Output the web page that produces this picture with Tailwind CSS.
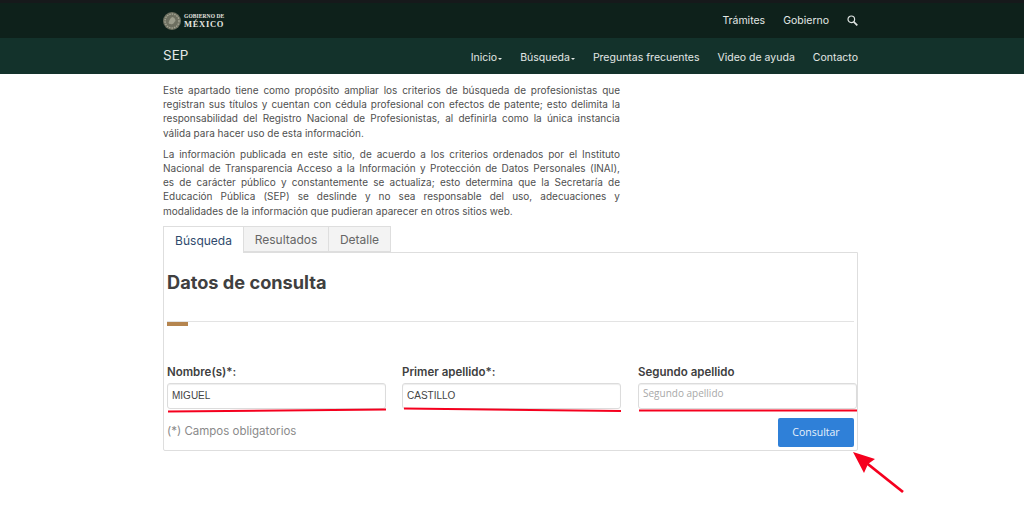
<!DOCTYPE html>
<html lang="es">
<head>
    <meta charset="UTF-8">
    <title>Cédula profesional - Búsqueda</title>
    <script src="https://cdn.jsdelivr.net/npm/@tailwindcss/browser@4"></script>
</head>
<body class="relative h-[526px] w-[1024px] overflow-hidden bg-white font-['Inter',sans-serif] text-[#505050]">
    <!-- Barra gobierno -->
    <div class="h-[3px] bg-[#16191b]"></div>
    <div class="h-[35px] bg-[#0e211b]">
        <div class="ml-[163px] flex h-full w-[695px] items-center justify-between">
            <div class="flex items-center gap-[3px]">
                <svg width="18" height="18" viewBox="0 0 18 18">
                    <circle cx="9" cy="9" r="9" fill="#6d6f60"/>
                    <circle cx="9" cy="9" r="7" fill="none" stroke="#a3a493" stroke-width="1.4" stroke-dasharray="1.5 1"/>
                    <path d="M5.5 11c1-3 2-5.5 4-6 1.5.3 3 2 3 4-1 .5-1.500 2.500-3 3-1.500.4-3 .2-4-1z" fill="#9c9d8c"/>
                </svg>
                <div class="font-['Liberation_Serif',serif] font-bold text-[#e6e6e0]">
                    <div class="text-[5.500px] leading-[7px] tracking-[0.1px]">GOBIERNO DE</div>
                    <div class="text-[8.500px] leading-[9px] tracking-[0.7px]">MÉXICO</div>
                </div>
            </div>
            <div class="flex items-center pt-[1px] text-[10.500px] text-[#e3e8e6]">
                <span class="mr-[18px]">Trámites</span>
                <span class="mr-[18px]">Gobierno</span>
                <svg class="mb-[2px]" width="11" height="11" viewBox="0 0 11 11" fill="none" stroke="#dfe4e2">
                    <circle cx="4.300" cy="4.300" r="3.300" stroke-width="1.200"/>
                    <path d="M6.800 6.800L10.300 10.300" stroke-width="1.700"/>
                </svg>
            </div>
        </div>
    </div>
    <!-- Barra SEP -->
    <div class="h-[36px] bg-[#13322b]">
        <div class="ml-[163px] flex h-full w-[695px] items-center justify-between text-[#e3e8e6]">
            <span class="mb-[2px] text-[13.500px]">SEP</span>
            <nav class="flex items-center pt-[3px] text-[10.500px]">
                <span class="flex items-center gap-[1px]">Inicio<i class="mt-[2px] border-x-[2.500px] border-t-[2.500px] border-x-transparent border-t-[#e3e8e6]"></i></span>
                <span class="ml-[18px] flex items-center gap-[1px]">Búsqueda<i class="mt-[2px] border-x-[2.500px] border-t-[2.500px] border-x-transparent border-t-[#e3e8e6]"></i></span>
                <span class="ml-[18px]">Preguntas frecuentes</span>
                <span class="ml-[18px]">Video de ayuda</span>
                <span class="ml-[18px]">Contacto</span>
            </nav>
        </div>
    </div>

    <main class="ml-[163px] w-[695px]">
        <!-- Texto -->
        <div class="w-[457px] pt-[9px] text-[10px] leading-[14.200px] whitespace-nowrap [&>p>span]:block [&>p>span]:[text-align:justify] [&>p>span]:[text-align-last:justify]">
            <p>
                <span>Este apartado tiene como propósito ampliar los criterios de búsqueda de profesionistas que</span>
                <span>registran sus títulos y cuentan con cédula profesional con efectos de patente; esto delimita la</span>
                <span>responsabilidad del Registro Nacional de Profesionistas, al definirla como la única instancia</span>
                <span class="[text-align-last:left]!">válida para hacer uso de esta información.</span>
            </p>
            <p class="mt-[7px]">
                <span>La información publicada en este sitio, de acuerdo a los criterios ordenados por el Instituto</span>
                <span>Nacional de Transparencia  Acceso a la Información y Protección de Datos Personales (INAI),</span>
                <span>es de carácter público y constantemente se actualiza; esto determina que la Secretaría de</span>
                <span>Educación Pública (SEP) se deslinde y no sea responsable del uso, adecuaciones y</span>
                <span class="[text-align-last:left]!">modalidades de la información que pudieran aparecer en otros sitios web.</span>
            </p>
        </div>

        <!-- Pestañas -->
        <div class="mt-[8px] flex h-[27px] text-[12px]">
            <div class="z-10 flex h-[27px] w-[81px] items-center justify-center border-x border-t border-[#dedede] bg-white pt-[2px] text-[#2f4a6d]">Búsqueda</div>
            <div class="flex h-[26px] w-[85px] items-center justify-center border-y border-r border-[#dedede] bg-[#f3f3f3] pt-[2px] text-[#666]">Resultados</div>
            <div class="flex h-[26px] w-[62px] items-center justify-center border-y border-r border-[#dedede] bg-[#f3f3f3] pt-[2px] text-[#666]">Detalle</div>
        </div>

        <!-- Panel -->
        <div class="-mt-px h-[199px] rounded-b-[2px] border border-[#dedede] px-[3px]">
            <h2 class="pt-[17px] text-[18.200px] leading-[24px] font-bold text-[#404040]">Datos de consulta</h2>
            <div class="mt-[27px] h-px bg-[#e3e3e3]"></div>
            <div class="h-[4px] w-[21px] bg-[#b5854f]"></div>

            <div class="mt-[38px] grid grid-cols-[219px_219px_219px] gap-x-[16px] text-[11.500px] font-semibold text-[#404040]">
                <label>Nombre(s)*:</label>
                <label>Primer apellido*:</label>
                <label class="ml-[1px]">Segundo apellido</label>
            </div>
            <div class="mt-[2px] grid grid-cols-[219px_219px_219px] gap-x-[16px] text-[10px]">
                <div class="flex h-[26px] items-center rounded-[3px] border border-[#dcdcdc] px-[4px] pb-[2px] font-['Liberation_Sans',sans-serif] text-[#444] shadow-[inset_0_1px_1px_rgba(0,0,0,0.07)]">MIGUEL</div>
                <div class="flex h-[26px] items-center rounded-[3px] border border-[#dcdcdc] px-[4px] pb-[2px] font-['Liberation_Sans',sans-serif] text-[#444] shadow-[inset_0_1px_1px_rgba(0,0,0,0.07)]">CASTILLO</div>
                <div class="ml-[1px] flex h-[26px] w-[219px] items-center rounded-[3px] border border-[#dcdcdc] px-[4px] pb-[5px] font-['Open_Sans',sans-serif] text-[#a8a8a8] shadow-[inset_0_1px_1px_rgba(0,0,0,0.07)]">Segundo apellido</div>
            </div>
            <div class="mt-[9px] flex items-start justify-between">
                <span class="mt-[5px] text-[11.500px] text-[#8a8a8a]">(*) Campos obligatorios</span>
                <button class="h-[29px] w-[76px] rounded-[2px] bg-[#2f80d8] font-['Open_Sans',sans-serif] text-[10.500px] text-[#e8f1fb]">Consultar</button>
            </div>
        </div>
    </main>

    <!-- Marcas rojas sobre la captura -->
    <svg class="absolute top-0 left-0" width="1024" height="526" fill="none" stroke="#f5001e">
        <path d="M168 411.500L386 409.500" stroke-width="2"/>
        <path d="M404 408.500L621 411" stroke-width="2"/>
        <path d="M639 410.500H857" stroke-width="2"/>
        <path d="M903 492L864 461" stroke-width="2.800"/>
        <path d="M853 452L875 459L868 464L864 473Z" fill="#f5001e" stroke="none"/>
    </svg>
</body>
</html>
